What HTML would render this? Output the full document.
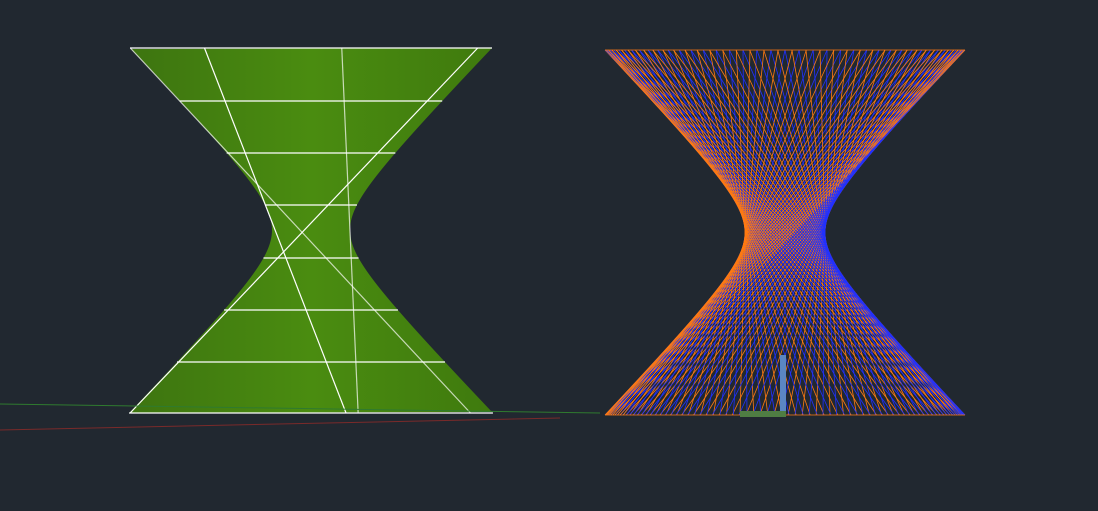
<!DOCTYPE html>
<html><head><style>html,body{margin:0;padding:0;background:#212830;width:1098px;height:511px;overflow:hidden}</style></head>
<body>
<svg id="s" width="1098" height="511" xmlns="http://www.w3.org/2000/svg">
<defs>
<linearGradient id="g" x1="0" x2="1" y1="0" y2="0">
<stop offset="0" stop-color="#3d7410"/><stop offset="0.5" stop-color="#4a8c10"/><stop offset="1" stop-color="#3f7a0e"/>
</linearGradient>
</defs>
<path id="hl" fill="url(#g)"/>
<g id="lw" stroke="#fff" stroke-width="1.2" fill="none"></g>
<g id="rw" stroke-width="0.8" fill="none"></g>
<line x1="0" y1="404" x2="600" y2="413" stroke="#2f7a2f" stroke-width="1"/>
<line x1="0" y1="430" x2="560" y2="418" stroke="#7a2a2a" stroke-width="1"/>
<rect x="780" y="355" width="6" height="58" fill="#5b86c2"/>
<rect x="740" y="411" width="46" height="6" fill="#4f7d43"/>
</svg>
<script>
var ns="http://www.w3.org/2000/svg";
function L(g,x1,y1,x2,y2,c,o){var l=document.createElementNS(ns,"line");l.setAttribute("x1",x1);l.setAttribute("y1",y1);l.setAttribute("x2",x2);l.setAttribute("y2",y2);if(c)l.setAttribute("stroke",c);if(o)l.setAttribute("stroke-opacity",o);g.appendChild(l);}
var cx=311,yt=48,yb=413,yw=230,a=39,R=181;
var b=Math.sqrt(R*R-a*a)/182;
var d="";for(var y=yt;y<=yb;y+=2){var w=Math.sqrt(a*a+b*b*(y-yw)*(y-yw));d+=(y==yt?"M":"L")+(cx+w)+","+y;}
for(var y=yb;y>=yt;y-=2){var w=Math.sqrt(a*a+b*b*(y-yw)*(y-yw));d+="L"+(cx-w)+","+y;}
document.getElementById("hl").setAttribute("d",d+"Z");
var lw=document.getElementById("lw");
[48,101,153,205,258,310,362,413].forEach(function(y){var w=Math.sqrt(a*a+b*b*(y-yw)*(y-yw));L(lw,cx-w,y,cx+w,y);});
var phi=2*Math.acos(a/R);
[0.4,2.2].forEach(function(t,i){L(lw,cx+R*Math.cos(t),yt,cx+R*Math.cos(t+phi),yb,null,1);L(lw,cx+R*Math.cos(t+1),yt,cx+R*Math.cos(t+1-phi),yb,null,0.7);});
var rw=document.getElementById("rw");
var cx2=785,t2=50,b2=415,R2=180,a2=40,phi2=2*Math.acos(a2/R2),N=80;
for(var i=0;i<N;i++){var t=i*2*Math.PI/N;
L(rw,cx2+R2*Math.cos(t),t2,cx2+R2*Math.cos(t+phi2),b2,"#2030ff");
L(rw,cx2+R2*Math.cos(t+0.04),t2,cx2+R2*Math.cos(t+0.04-phi2),b2,"#ff7a10");}
L(rw,605,50,965,50,"#ff7a10");L(rw,605,415,965,415,"#ff7a10");
</script>
</body></html>
